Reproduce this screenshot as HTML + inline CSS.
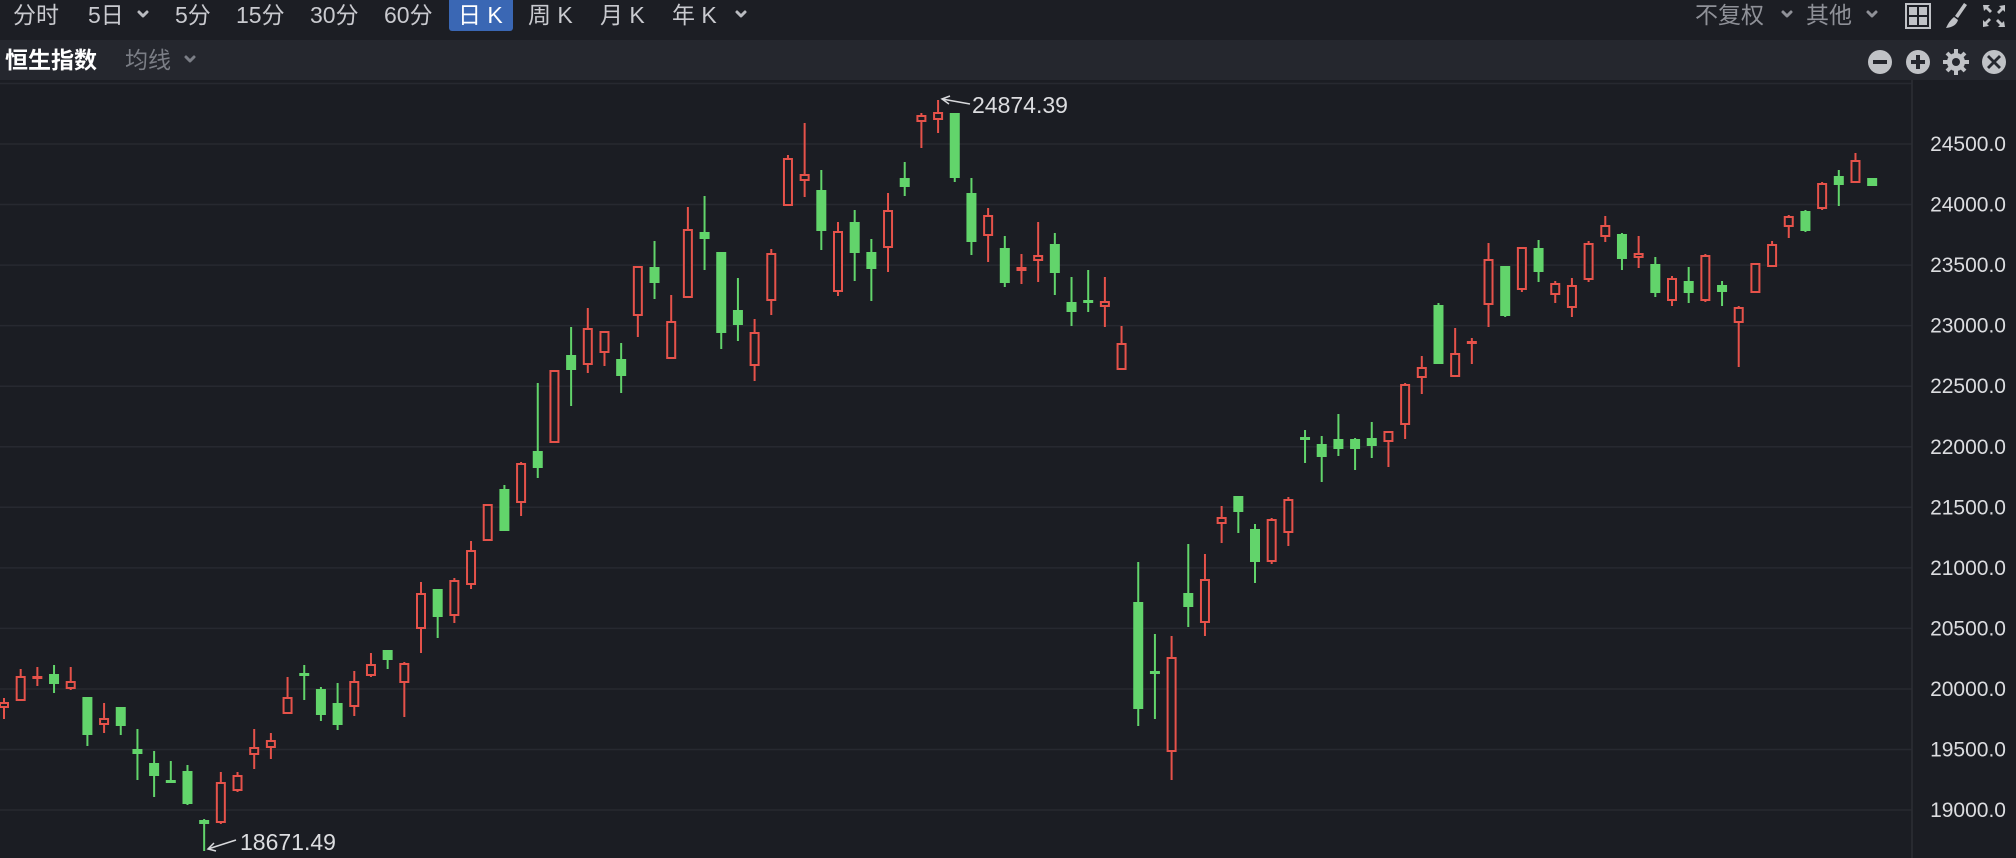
<!DOCTYPE html>
<html><head><meta charset="utf-8"><style>
*{margin:0;padding:0;box-sizing:border-box}
html,body{width:2016px;height:858px;overflow:hidden;background:#1b1d23;font-family:"Liberation Sans","Noto Sans CJK SC",sans-serif}
.t{position:absolute;font-size:23px;line-height:23px;color:#c9cacf;white-space:nowrap}
.g{color:#8f9198}
#band{position:absolute;left:0;top:40px;width:2016px;height:40px;background:#25272e}
#top{position:absolute;left:0;top:0;width:2016px;height:40px;background:#1c1e24}
svg{position:absolute;left:0;top:0}
</style></head><body>
<div id="top"></div>
<div id="band"></div>
<div style="position:absolute;left:449px;top:0;width:64px;height:31px;background:#3a67b4;border-radius:0 0 3px 3px"></div>
<div class="t" style="left:13px;top:4px">分时</div>
<div class="t" style="left:88px;top:4px">5日</div>
<div class="t" style="left:175px;top:4px">5分</div>
<div class="t" style="left:236px;top:4px">15分</div>
<div class="t" style="left:310px;top:4px">30分</div>
<div class="t" style="left:384px;top:4px">60分</div>
<div class="t" style="left:458px;top:4px;color:#fff">日 K</div>
<div class="t" style="left:528px;top:4px">周 K</div>
<div class="t" style="left:600px;top:4px">月 K</div>
<div class="t" style="left:672px;top:4px">年 K</div>
<div class="t g" style="left:1695px;top:4px">不复权</div>
<div class="t g" style="left:1806px;top:4px">其他</div>
<div class="t" style="left:5px;top:49px;color:#fff;font-weight:bold">恒生指数</div>
<div class="t" style="left:125px;top:49px;color:#7b7e86">均线</div>
<svg width="2016" height="858" viewBox="0 0 2016 858" id="s">
<g fill="none" stroke-width="3" stroke-linecap="round" stroke-linejoin="round">
<polyline points="139,12 143,16 147,12" stroke="#b9bbc0"/>
<polyline points="737,12 741,16 745,12" stroke="#b9bbc0"/>
<polyline points="1783,12 1787,16 1791,12" stroke="#8f9198"/>
<polyline points="1868,12 1872,16 1876,12" stroke="#8f9198"/>
<polyline points="186,57 190,61 194,57" stroke="#7b7e86"/>
</g>
<g fill="#c0c2c6">
<rect x="1906" y="4" width="24" height="24" fill="none" stroke="#c0c2c6" stroke-width="2"/>
<rect x="1909" y="7" width="8" height="8"/><rect x="1919" y="7" width="8" height="8"/>
<rect x="1909" y="17" width="8" height="8"/><rect x="1919" y="17" width="8" height="8"/>
<path d="M1967 5 L1958 18 L1955 16 L1964 3 Z"/>
<path d="M1954 17 L1958 20 Q1956 27 1946 28 Q1949 21 1954 17 Z"/>
<path d="M1983 5h7l-2 2 4 4-2 2-4-4-2 2z M2005 5v7l-2-2-4 4-2-2 4-4-2-2z M1983 27v-7l2 2 4-4 2 2-4 4 2 2z M2005 27h-7l2-2-4-4 2-2 4 4 2-2z"/>
<circle cx="1880" cy="62" r="12"/><circle cx="1918" cy="62" r="12"/><circle cx="1994" cy="62" r="12"/>
<rect x="1873" y="60" width="14" height="4" fill="#25272e"/>
<rect x="1911" y="60" width="14" height="4" fill="#25272e"/><rect x="1916" y="55" width="4" height="14" fill="#25272e"/>
<path d="M1989 55l5 5 5-5 2 2-5 5 5 5-2 2-5-5-5 5-2-2 5-5-5-5z" fill="#25272e"/>
<circle cx="1956" cy="62" r="9"/>
<g stroke="#c0c2c6" stroke-width="4"><line x1="1956" y1="49" x2="1956" y2="75"/><line x1="1943" y1="62" x2="1969" y2="62"/><line x1="1947" y1="53" x2="1965" y2="71"/><line x1="1965" y1="53" x2="1947" y2="71"/></g>
<circle cx="1956" cy="62" r="4" fill="#25272e"/>
</g>
<g id="grid" stroke="#272930" stroke-width="1.5"></g>
<line x1="1912" y1="80" x2="1912" y2="858" stroke="#2c2e35" stroke-width="1.5"/>
<g id="lbl" fill="#dcdde0" font-family="Liberation Sans, sans-serif" font-size="21" text-anchor="end"></g>
<g id="cd"></g>
<g stroke="#d8d9dc" stroke-width="1.5" fill="none">
<line x1="942" y1="99" x2="970" y2="104"/><polyline points="950,96 942,99 949,104"/>
<line x1="208" y1="849" x2="236" y2="840"/><polyline points="214,843 208,849 216,851"/>
</g>
<g fill="#dcdde0" font-family="Liberation Sans, sans-serif" font-size="23">
<text x="972" y="113">24874.39</text>
<text x="240" y="850">18671.49</text>
</g>
</svg>
<script>
var NS="http://www.w3.org/2000/svg";
function el(p,n,a){var e=document.createElementNS(NS,n);for(var k in a)e.setAttribute(k,a[k]);p.appendChild(e);return e;}
var grid=document.getElementById('grid'),lbl=document.getElementById('lbl'),cd=document.getElementById('cd');
for(var p=25000;p>=19000;p-=500){var y=144+(24500-p)*0.1211;el(grid,'line',{x1:0,x2:1912,y1:y,y2:y});
if(p<25000){var t=el(lbl,'text',{x:2006,y:y+7});t.textContent=p.toFixed(1);}}
var D=[
'r698,702,708,719','r669,676,701,701','r667,676,679,686','g665,674,684,693','r667,681,689,690',
'g697,697,735,746','r703,718,725,733','g707,707,726,735','g729,749,754,780','g751,763,776,797',
'g761,780,781,782','g765,771,804,805','g819,820,824,851','r772,782,823,824','r772,775,791,792',
'r729,747,755,769','r733,740,748,759','r677,697,714,714','g665,673,676,700','g687,689,715,721',
'g683,703,725,730','r671,681,707,716','r653,664,676,677','g650,650,660,669','r662,663,683,717',
'r582,593,629,653','g589,589,617,638','r578,580,616,623','r541,550,585,589','r504,504,541,541',
'g485,489,531,531','r462,463,503,516','g383,451,468,478','r370,370,443,443','g327,355,370,406',
'r308,328,365,373','r331,331,353,366','g343,359,376,393','r266,266,316,337','g241,267,283,299',
'r295,321,359,359','r207,229,298,298','g196,232,239,270','g252,252,333,349','g278,310,325,341',
'r319,332,366,381','r249,253,301,315','r155,158,206,206','r123,174,181,197','g170,190,231,250',
'r222,231,292,296','g210,222,253,281','g239,252,269,301','r193,210,248,272','g162,178,187,196',
'r113,115,122,148','r100,112,120,133','g113,113,178,182','g178,193,242,255','r208,215,236,262',
'g236,248,283,287','r254,267,271,284','r222,255,261,282','g233,244,273,295','g277,302,312,326',
'g270,300,302,312','r277,301,307,327','r326,343,370,370',
'g562,602,709,726','g634,671,673,719','r636,657,752,780','g544,593,607,627','r554,579,623,636',
'r506,517,524,543','g496,496,512,533','g524,529,562,583','r518,519,562,564','r497,499,533,546',
'g430,437,439,463','g436,444,457,482','g414,439,449,456','g438,439,449,470','g422,438,446,458',
'r431,431,442,467','r383,384,425,439','r356,367,378,394','g303,305,364,364','r328,353,377,377',
'r338,341,344,364','r243,259,305,327','g266,266,316,317','r247,247,290,292','g240,248,272,282',
'r281,283,295,303','r278,285,308,317','r241,243,280,282','r216,225,237,242','g233,234,259,270',
'r236,253,258,268','g257,264,293,297','r276,278,301,306','g267,281,293,303','r254,255,301,302',
'g281,285,292,306','r306,307,323,367','r263,263,293,293','r241,244,267,267','r215,216,227,238',
'g210,211,231,232','r182,183,209,210','g170,176,185,206','r153,160,183,183','g178,178,186,186'];
var R='#e5524a',G='#62d46b';
D.forEach(function(s,i){var c=s[0],v=s.slice(1).split(',').map(Number),x=4+16.68*i,h=v[0],t=v[1],b=v[2],l=v[3];
if(b-t<3){b=t+3;}
if(c=='g'){el(cd,'line',{x1:x,x2:x,y1:h,y2:l,stroke:G,'stroke-width':2});el(cd,'rect',{x:x-5,y:t,width:10,height:b-t,fill:G});}
else{if(h<t)el(cd,'line',{x1:x,x2:x,y1:h,y2:t,stroke:R,'stroke-width':2});if(l>b)el(cd,'line',{x1:x,x2:x,y1:b,y2:l,stroke:R,'stroke-width':2});
el(cd,'rect',{x:x-4,y:t+1,width:8,height:Math.max(b-t-2,1),fill:'#1b1d23',stroke:R,'stroke-width':2});}
});
</script>
</body></html>
